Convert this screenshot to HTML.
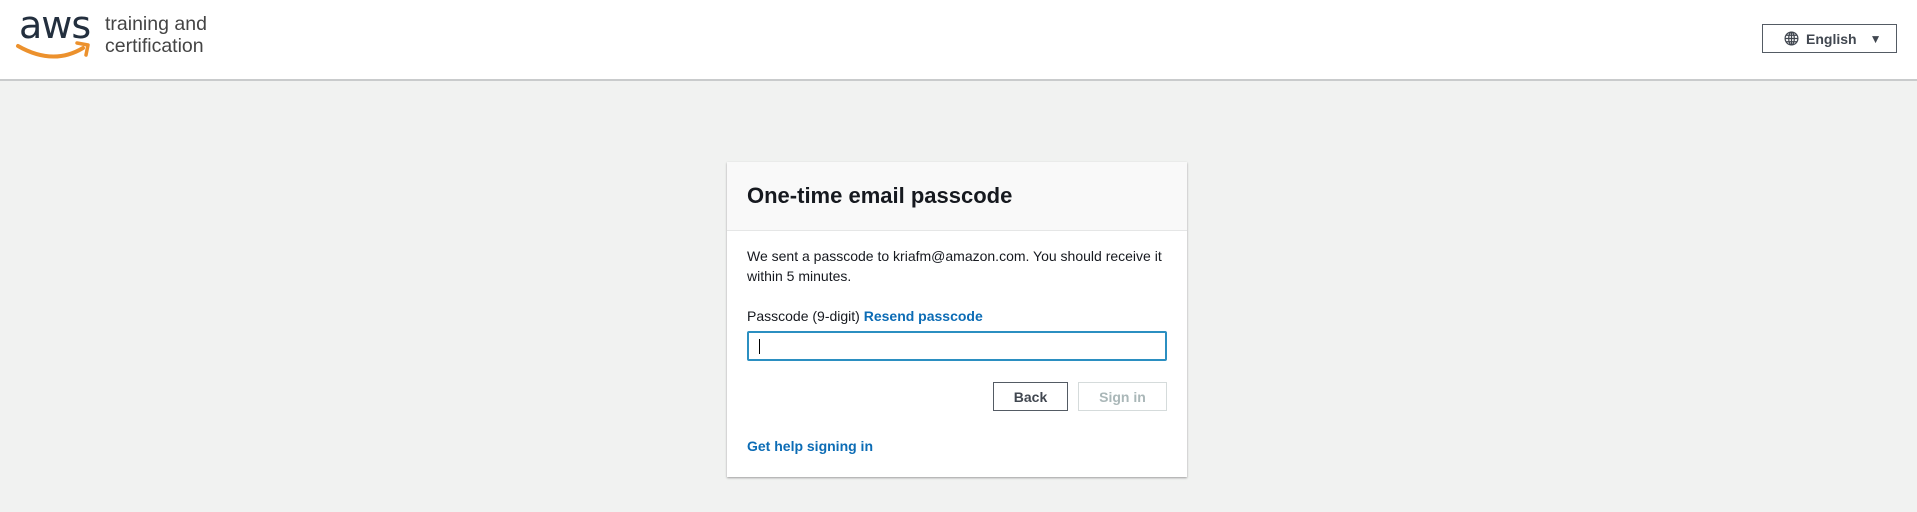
<!DOCTYPE html>
<html><head><meta charset="utf-8"><style>
*{box-sizing:border-box;margin:0;padding:0}
body{width:1917px;height:512px;background:#f1f2f1;font-family:"Liberation Sans",sans-serif;position:relative;overflow:hidden;color:#16191f}
.hdr{position:absolute;left:0;top:0;width:1917px;height:81px;background:#fff;border-bottom:2px solid #c9cbcc}
.aws{position:absolute;left:19px;top:3px;font-size:38px;color:#232f3e;letter-spacing:-1px;font-family:"DejaVu Sans",sans-serif;font-weight:normal}
.tc{position:absolute;left:105px;top:13px;font-size:19.5px;line-height:22px;color:#444;font-family:"Liberation Sans",sans-serif}
.lang{position:absolute;left:1762px;top:24px;width:135px;height:29px;border:1px solid #545b64;font-weight:bold;font-size:14px;color:#414750;display:flex;align-items:center;padding-left:21px}
.card{position:absolute;left:727px;top:162px;width:460px;height:315px;background:#fff;box-shadow:0 1px 2px rgba(0,0,0,.35)}
.ch{height:69px;background:#f9f9f9;border-bottom:1px solid #e5e6e6;padding:21px 20px 0;font-size:22px;font-weight:bold}
.p{position:absolute;left:20px;font-size:14px;line-height:20px}
.inp{position:absolute;left:20px;top:169px;width:420px;height:30px;border:2px solid #2b8fc1;border-radius:2px}
.inp:after{content:"";position:absolute;left:10px;top:6px;width:1px;height:15px;background:#000}
.btn{position:absolute;top:220px;height:29px;font-weight:bold;font-size:14px;display:flex;align-items:center;justify-content:center}
a{color:#0c6cb5;font-weight:bold;text-decoration:none}
</style></head><body>
<div class="hdr">
<div class="aws">aws</div>
<svg style="position:absolute;left:15px;top:40px" width="80" height="22" viewBox="0 0 80 22"><path d="M3 6 Q38 26 68 8" fill="none" stroke="#ec912d" stroke-width="4" stroke-linecap="round"/><path d="M62 3 L73 5 L71 15" fill="none" stroke="#ec912d" stroke-width="3.5" stroke-linecap="round" stroke-linejoin="round"/></svg>
<div class="tc">training and<br>certification</div>
<div class="lang"><svg width="15" height="15" viewBox="0 0 16 16" style="margin-right:7px"><g fill="none" stroke="#414750" stroke-width="1.3"><circle cx="8" cy="8" r="6.8"/><ellipse cx="8" cy="8" rx="3" ry="6.8"/><path d="M1.2 8H14.8M2.5 4.5H13.5M2.5 11.5H13.5M8 1.2V14.8"/></g></svg>English<span style="margin-left:13px;font-size:12px">▼</span></div>
</div>
<div class="card">
<div class="ch">One-time email passcode</div>
<div class="p" style="top:84px">We sent a passcode to kriafm@amazon.com. You should receive it<br>within 5 minutes.</div>
<div class="p" style="top:144px">Passcode (9-digit) <a>Resend passcode</a></div>
<div class="inp"></div>
<div class="btn" style="left:266px;width:75px;border:1px solid #545b64;color:#414750">Back</div>
<div class="btn" style="left:351px;width:89px;border:1px solid #d5dbdb;color:#aab7b8">Sign in</div>
<div class="p" style="top:274px"><a>Get help signing in</a></div>
</div>
</body></html>
